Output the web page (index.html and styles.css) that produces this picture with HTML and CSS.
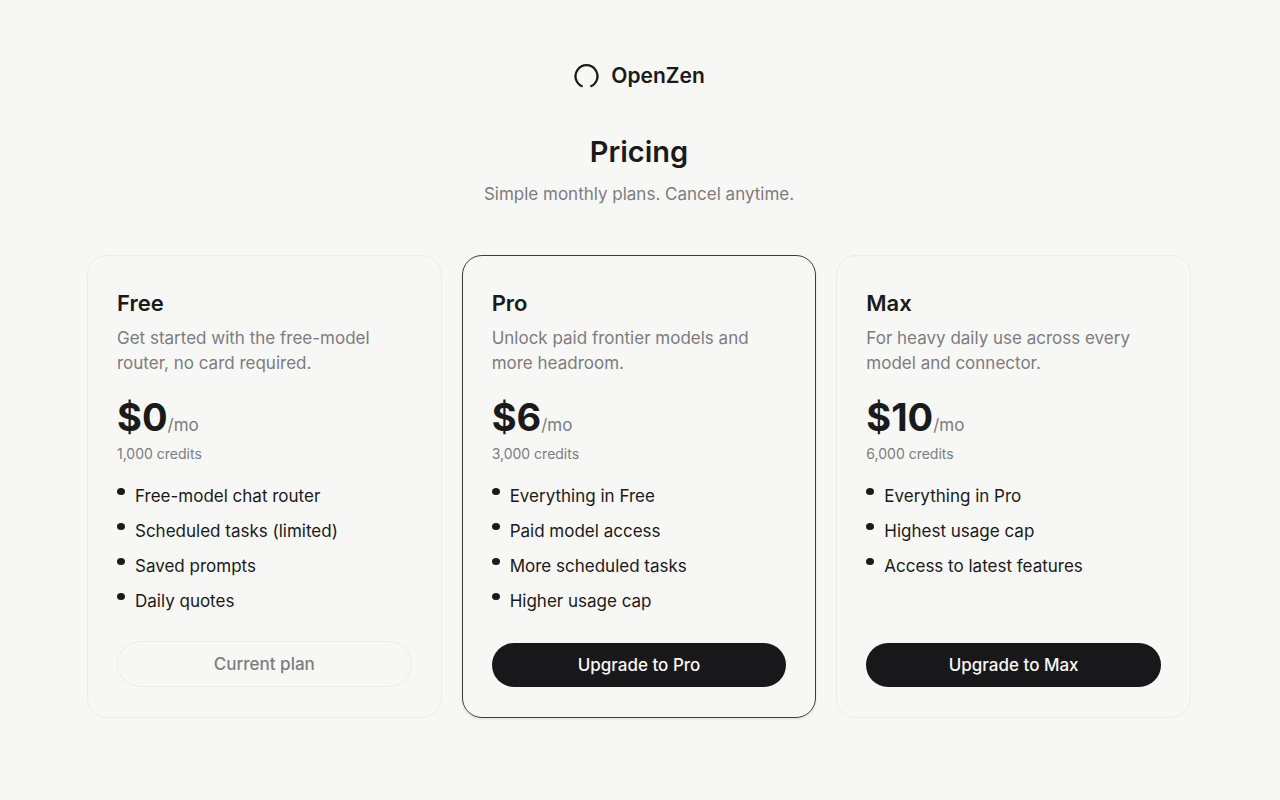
FILE: index.html
```html
<!DOCTYPE html>
<html lang="en">
<head>
  <meta charset="UTF-8">
  <meta name="viewport" content="width=device-width, initial-scale=1.0">
  <title>OpenZen - Pricing</title>
  <link rel="stylesheet" href="styles.css">
</head>
<body>
  <header class="header">
    <a class="logo" href="#">
      <svg class="logo-icon" viewBox="0 0 26 26" aria-hidden="true">
        <path d="M9.6 23.5 A11 11 0 1 1 17.4 23.5" fill="none" stroke="#1a1a1a" stroke-width="2.3"/>
      </svg>
      OpenZen
    </a>
    <h1>Pricing</h1>
    <p class="subtitle">Simple monthly plans. Cancel anytime.</p>
  </header>

  <main class="plans">
    <section class="card">
      <h2>Free</h2>
      <p class="description">Get started with the free-model router, no card required.</p>
      <p class="price"><strong>$0</strong><span>/mo</span></p>
      <p class="credits">1,000 credits</p>
      <ul class="features">
        <li>Free-model chat router</li>
        <li>Scheduled tasks (limited)</li>
        <li>Saved prompts</li>
        <li>Daily quotes</li>
      </ul>
      <button class="btn btn-current" type="button">Current plan</button>
    </section>

    <section class="card card-featured">
      <h2>Pro</h2>
      <p class="description">Unlock paid frontier models and more headroom.</p>
      <p class="price"><strong>$6</strong><span>/mo</span></p>
      <p class="credits">3,000 credits</p>
      <ul class="features">
        <li>Everything in Free</li>
        <li>Paid model access</li>
        <li>More scheduled tasks</li>
        <li>Higher usage cap</li>
      </ul>
      <button class="btn" type="button">Upgrade to Pro</button>
    </section>

    <section class="card">
      <h2>Max</h2>
      <p class="description">For heavy daily use across every model and connector.</p>
      <p class="price"><strong>$10</strong><span>/mo</span></p>
      <p class="credits">6,000 credits</p>
      <ul class="features">
        <li>Everything in Pro</li>
        <li>Highest usage cap</li>
        <li>Access to latest features</li>
      </ul>
      <button class="btn" type="button">Upgrade to Max</button>
    </section>
  </main>
</body>
</html>
```
FILE: styles.css
```css
* {
  box-sizing: border-box;
}
body {
  font-family: Inter, "Liberation Sans", sans-serif;
  font-size: 17px;
  line-height: 25px;
  background-color: #f7f7f5;
  color: #1a1a1a;
  margin: 0;
  padding: 60px 89px 60px 87px;
}
h1, h2, p, ul {
  margin: 0;
  padding: 0;
}
.header {
  display: flex;
  flex-direction: column;
  align-items: center;
  margin-bottom: 48px;
}
.logo {
  display: flex;
  align-items: center;
  gap: 12px;
  margin-bottom: 40px;
  color: #1a1a1a;
  font-size: 21px;
  font-weight: 600;
  line-height: 32px;
  text-decoration: none;
}
.logo-icon {
  width: 26px;
  height: 26px;
}
h1 {
  margin-bottom: 10px;
  font-size: 29px;
  font-weight: 600;
  line-height: 40px;
}
.subtitle, .description {
  color: #7c7c80;
}
.plans {
  display: grid;
  grid-template-columns: repeat(3, 1fr);
  gap: 20px;
}
.card {
  display: flex;
  flex-direction: column;
  padding: 30px 29px;
  border: 1px solid #ebebe9;
  border-radius: 20px;
}
.card-featured {
  border-color: #3c3c3c;
  box-shadow: 0 1px 3px rgba(0, 0, 0, 0.1);
}
h2 {
  margin-bottom: 6px;
  font-size: 22px;
  font-weight: 600;
  line-height: 34px;
}
.price {
  display: flex;
  align-items: baseline;
  margin-top: 22px;
  color: #7c7c80;
  line-height: 38px;
}
.price strong {
  color: #1a1a1a;
  font-size: 38px;
  font-weight: 700;
}
.credits {
  margin-bottom: 20px;
  color: #7c7c80;
  font-size: 14px;
  line-height: 20px;
}
.features {
  display: flex;
  flex-direction: column;
  gap: 10px;
  margin-bottom: 27px;
  list-style: none;
}
.features li {
  display: flex;
  gap: 10px;
}
.features li::before {
  content: "";
  width: 8px;
  height: 7px;
  margin-top: 4px;
  border-radius: 50%;
  background-color: #1a1a1a;
}
.btn {
  height: 44px;
  margin-top: auto;
  border: none;
  border-radius: 23px;
  background-color: #18181a;
  color: #f7f7f5;
  font-family: inherit;
  font-size: 17px;
  font-weight: 500;
  cursor: pointer;
}
.btn-current {
  height: 46px;
  border: 1px solid #ebebe9;
  background-color: transparent;
  color: #7c7c80;
  cursor: default;
}
```
